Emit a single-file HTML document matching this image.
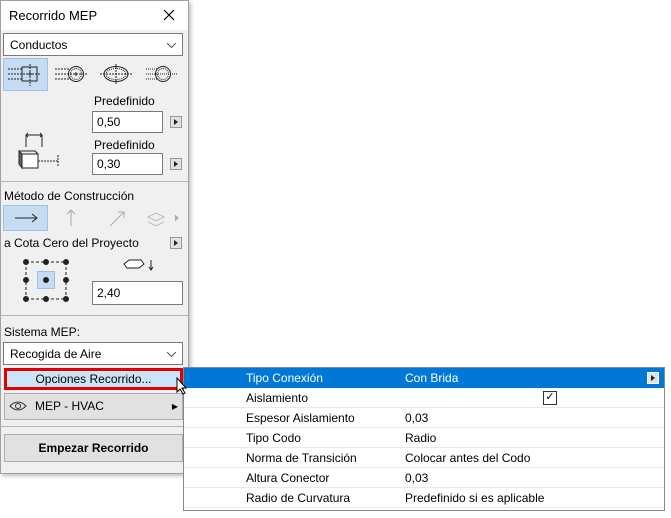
<!DOCTYPE html><html><head><style>
body{margin:0;width:671px;height:518px;background:#fff;font-family:"Liberation Sans",sans-serif;font-size:12px;color:#000;position:relative;overflow:hidden}
.a{position:absolute}
.panel{left:0;top:0;width:189px;height:474px;background:#f0f0f0;border:1px solid #a0a0a0;box-sizing:border-box;box-shadow:2px 2px 4px rgba(0,0,0,.25)}
.inp{background:#fff;border:1px solid #7a7a7a;box-sizing:border-box;padding-left:4px;line-height:20px}
.arr{width:12px;height:12px;border:1px solid #999;background:#e1e1e1;box-sizing:border-box}
.arr:after{content:"";position:absolute;left:3px;top:2px;border-left:4px solid #222;border-top:3px solid transparent;border-bottom:3px solid transparent}
.sep{height:1px;background:#b5b5b5;left:0;width:188px}
.row{left:184px;width:480px;height:20px;border-bottom:1px solid #e8e8e8;box-sizing:border-box;line-height:20px}
.row span{position:absolute;left:62px}.row b{font-weight:normal;position:absolute;left:221px}
</style></head><body>
<div class="a panel"></div>
<div class="a" style="left:1px;top:1px;width:187px;height:29px;background:#fff"></div>
<div class="a" style="left:9px;top:8px;font-size:13px">Recorrido MEP</div>
<svg class="a" style="left:163px;top:9px" width="12" height="12" stroke="#000" stroke-width="1.2"><path d="M1 1l10 10M11 1l-10 10"/></svg>
<div class="a inp" style="left:3px;top:33px;width:180px;height:23px;line-height:22px;padding-left:6px">Conductos<svg class="a" style="right:6px;top:9px" width="9" height="5" fill="none" stroke="#555"><path d="M0 0l4.5 4.5 4.5-4.5"/></svg></div>
<div class="a" style="left:3px;top:58px;width:45px;height:33px;background:#c6dcf2;border:1px solid #99c2ea;box-sizing:border-box"></div>
<svg class="a" style="left:0;top:58px" width="190" height="120" fill="none" stroke="#222" stroke-width="1">
<path d="M8 11h14M8 21h14M8 16h32M30 6v22" stroke-dasharray="2 1"/><rect x="22" y="9" width="15" height="14"/><path d="M28 16h4M30 14v4"/>
<path d="M55 11h16M55 21h16M55 16h32" stroke-dasharray="2 1"/><circle cx="76" cy="16" r="7.5"/><circle cx="76" cy="16" r="5.5" stroke-dasharray="1 1"/><path d="M74 16h4M76 14v4"/>
<ellipse cx="116" cy="16" rx="12" ry="7.5"/><ellipse cx="116" cy="16" rx="10" ry="5.5" stroke-dasharray="1 1"/><path d="M100 16h32M116 6v20" stroke-dasharray="2 1"/>
<path d="M146 11h12M146 21h12M146 16h32" stroke-dasharray="1 1"/><circle cx="163" cy="16" r="7.5"/><circle cx="163" cy="16" r="5.5" stroke-dasharray="1 1"/>
<path d="M26 77h16M26 77v12M42 77v12M26 77l2-2M26 77l2 2M42 77l-2-2M42 77l-2 2" /><rect x="22" y="96" width="16" height="14" fill="#fff"/><path d="M22 96l-3-3v13l3 4z" fill="#666"/><path d="M19 93h16l3 3" /><path d="M38 103h20M58 97v12" stroke-dasharray="2 1"/>
</svg>
<div class="a" style="left:94px;top:94px">Predefinido</div>
<div class="a inp" style="left:92px;top:111px;width:71px;height:22px">0,50</div>
<div class="a arr" style="left:170px;top:116px"></div>
<div class="a" style="left:94px;top:138px">Predefinido</div>
<div class="a inp" style="left:92px;top:153px;width:71px;height:22px">0,30</div>
<div class="a arr" style="left:170px;top:158px"></div>
<div class="a sep" style="top:181px"></div>
<div class="a" style="left:4px;top:189px">Método de Construcción</div>
<div class="a" style="left:3px;top:205px;width:45px;height:26px;background:#c6dcf2;border:1px solid #99c2ea;box-sizing:border-box"></div>
<svg class="a" style="left:0;top:205px" width="190" height="30" fill="none" stroke="#222">
<path d="M15 13h22M32 9l5 4-5 4"/><path d="M71 21v-16M67 9l4-4 4 4" stroke="#aaa"/><path d="M110 21l14-14M118 7h6v6" stroke="#aaa"/><path d="M148 12l8-4 8 4-8 4zM148 17l8 4 8-4" stroke="#bbb"/><path d="M175 10l3 3-3 3" fill="#aaa" stroke="#aaa"/>
</svg>
<div class="a" style="left:4px;top:236px">a Cota Cero del Proyecto</div>
<div class="a arr" style="left:170px;top:237px"></div>
<div class="a" style="left:37px;top:271px;width:18px;height:18px;background:#c6dcf2;border:1px solid #99c2ea;box-sizing:border-box"></div>
<svg class="a" style="left:0;top:255px" width="190" height="50" stroke="#222" fill="#222">
<path d="M26 7h40M26 44h40M26 7v37M66 7v37" fill="none" stroke-dasharray="3 2"/>
<circle cx="26" cy="7" r="2.5"/><circle cx="46" cy="7" r="2.5"/><circle cx="66" cy="7" r="2.5"/><circle cx="26" cy="25" r="2.5"/><circle cx="46" cy="25" r="2.5"/><circle cx="66" cy="25" r="2.5"/><circle cx="26" cy="44" r="2.5"/><circle cx="46" cy="44" r="2.5"/><circle cx="66" cy="44" r="2.5"/>
<path d="M124 9l5-4h12l3 4-5 4h-12z" fill="#fff"/><path d="M151 5v10M149 12l2 3 2-3" fill="none"/>
</svg>
<div class="a inp" style="left:92px;top:281px;width:91px;height:24px;line-height:23px">2,40</div>
<div class="a sep" style="top:315px"></div>
<div class="a" style="left:4px;top:325px">Sistema MEP:</div>
<div class="a inp" style="left:3px;top:342px;width:180px;height:23px;line-height:22px;padding-left:6px">Recogida de Aire<svg class="a" style="right:6px;top:9px" width="9" height="5" fill="none" stroke="#555"><path d="M0 0l4.5 4.5 4.5-4.5"/></svg></div>
<div class="a" style="left:4px;top:368px;width:179px;height:22px;background:#cce4f7;border:3px solid #e00000;box-sizing:border-box;text-align:center;line-height:16px">Opciones Recorrido...</div>
<div class="a" style="left:4px;top:393px;width:179px;height:27px;background:#e1e1e1;border:1px solid #adadad;box-sizing:border-box;line-height:25px;padding-left:30px">MEP - HVAC<span class="a" style="right:4px;top:0;font-size:8px">▶</span></div>
<svg class="a" style="left:9px;top:400px" width="18" height="12" fill="none" stroke="#333"><path d="M1 6q8-8 16 0q-8 8-16 0z"/><circle cx="9" cy="6" r="2.5"/></svg>
<div class="a sep" style="top:426px"></div>
<div class="a" style="left:4px;top:434px;width:179px;height:28px;background:#e1e1e1;border:1px solid #adadad;box-sizing:border-box;line-height:26px;text-align:center;font-weight:bold">Empezar Recorrido</div>
<div class="a" style="left:183px;top:367px;width:482px;height:144px;border:1px solid #888;background:#fff;box-sizing:border-box"></div>
<div class="a row" style="top:368px;background:#0078d7;color:#fff;border:0"><span>Tipo Conexión</span><b>Con Brida</b><i class="a arr" style="left:463px;top:4px;border-color:#fff"></i></div>
<div class="a row" style="top:388px"><span>Aislamiento</span><b style="left:359px;top:3px;width:12px;height:12px;border:1px solid #333;line-height:11px;font-size:11px;text-align:center">✓</b></div>
<div class="a row" style="top:408px"><span>Espesor Aislamiento</span><b>0,03</b></div>
<div class="a row" style="top:428px"><span>Tipo Codo</span><b>Radio</b></div>
<div class="a row" style="top:448px"><span>Norma de Transición</span><b>Colocar antes del Codo</b></div>
<div class="a row" style="top:468px"><span>Altura Conector</span><b>0,03</b></div>
<div class="a row" style="top:488px"><span>Radio de Curvatura</span><b>Predefinido si es aplicable</b></div>
<svg class="a" style="left:176px;top:377px" width="12" height="18"><path d="M1 1v14l3-3 3 5 2-1-3-5h4z" fill="#fff" stroke="#000"/></svg>
</body></html>
